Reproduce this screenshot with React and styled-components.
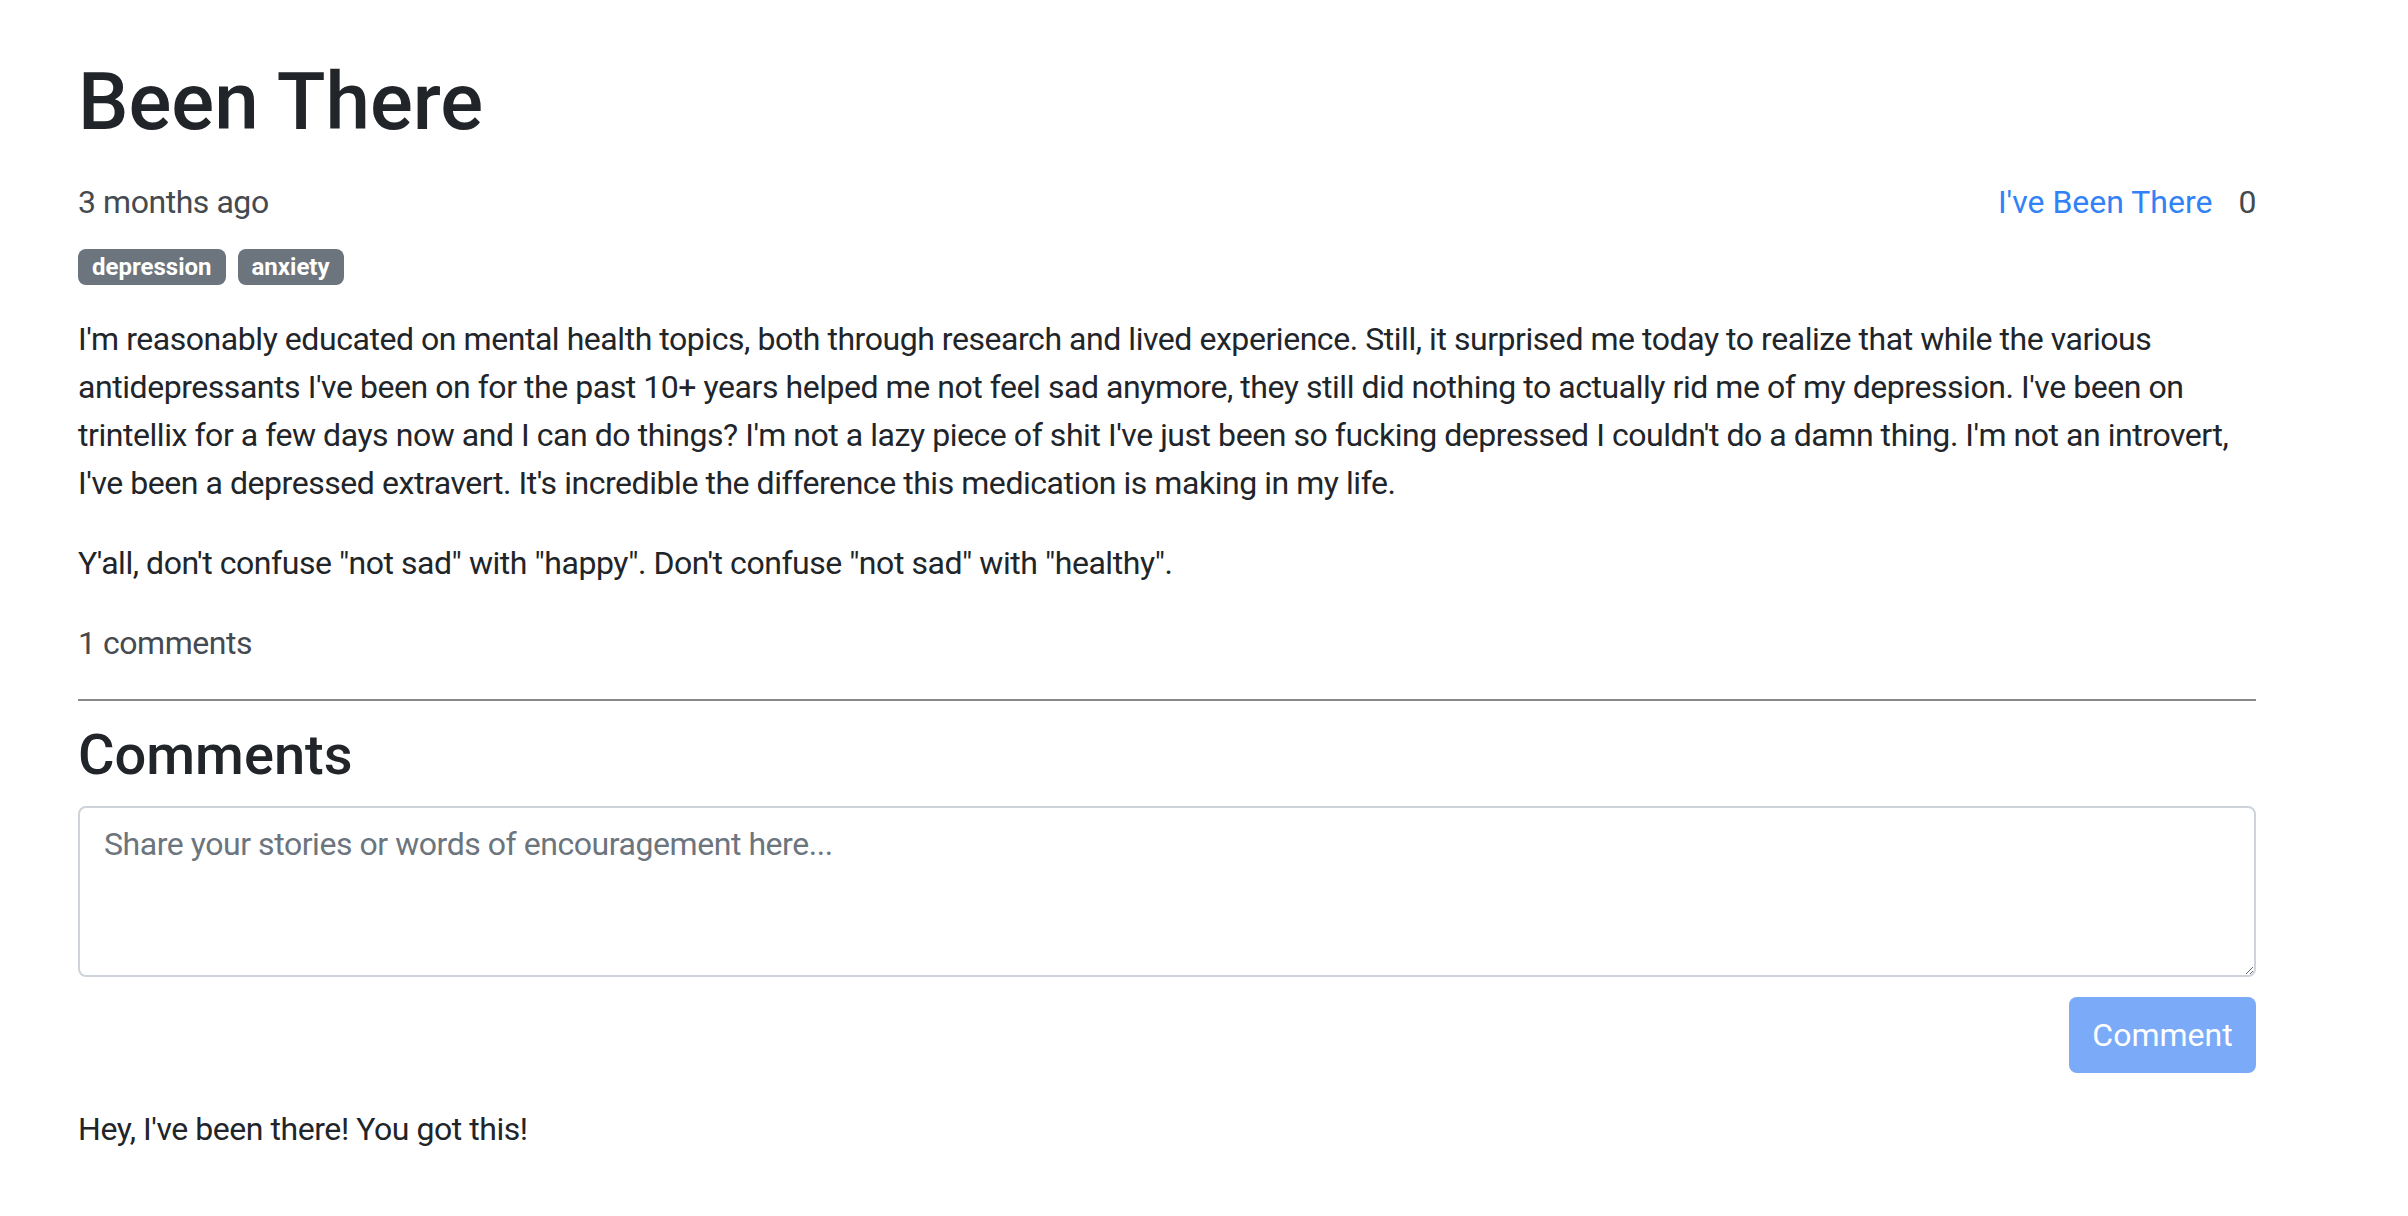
import React from "react";
import styled, { createGlobalStyle } from "styled-components";

const GlobalStyle = createGlobalStyle`
  * { box-sizing: border-box; }
  body {
    margin: 0;
    background: #fff;
    color: #212529;
    font-family: Roboto, "Liberation Sans", sans-serif;
    font-size: 32px;
    line-height: 1.5;
    letter-spacing: -0.45px;
  }
`;

const Page = styled.main`
  width: 2178px;
  margin-left: 78px;
  padding-top: 54px;
  padding-bottom: 48px;
`;

const Title = styled.h1`
  margin: 0 0 28px;
  font-size: 80px;
  font-weight: 500;
  line-height: 1.2;
  letter-spacing: 0;
`;

const MetaRow = styled.div`
  display: flex;
  justify-content: space-between;
  align-items: center;
  color: #454a50;
`;

const Votes = styled.div`
  display: flex;
  align-items: center;
  gap: 26px;
`;

const VoteLink = styled.a`
  color: #3182f6;
  letter-spacing: 0;
  text-decoration: none;
  cursor: pointer;
`;

const Tags = styled.div`
  display: flex;
  gap: 12px;
  margin: 23px 0 30px;
`;

const Badge = styled.span`
  display: inline-block;
  padding: 6px 14px;
  font-size: 24px;
  font-weight: 700;
  line-height: 1;
  letter-spacing: 0;
  color: #fff;
  background: #6c757d;
  border-radius: 8px;
`;

const Body = styled.p`
  margin: 0 0 32px;
  color: ${(p) => (p.muted ? "#454a50" : "#212529")};
`;

const Rule = styled.hr`
  margin: 0 0 21px;
  border: 0;
  border-top: 2px solid #888;
`;

const SectionTitle = styled.h3`
  margin: 0 0 17px;
  font-size: 56px;
  font-weight: 500;
  line-height: 1.2;
  letter-spacing: 0;
`;

const TextArea = styled.textarea`
  display: block;
  width: 100%;
  height: 171px;
  padding: 12px 24px;
  font-family: inherit;
  font-size: 32px;
  line-height: 1.5;
  letter-spacing: -0.45px;
  color: #495057;
  border: 2px solid #ced4da;
  border-radius: 8px;
  resize: vertical;
  outline: none;
  &::placeholder { color: #6c757d; }
`;

const Actions = styled.div`
  display: flex;
  justify-content: flex-end;
  margin: 20px 0 32px;
`;

const Button = styled.button`
  width: 187px;
  height: 76px;
  font-family: inherit;
  font-size: 32px;
  color: #fff;
  background: #7aaaf8;
  border: 0;
  border-radius: 8px;
`;

const Comment = styled.p`
  margin: 0;
`;

export default function App() {
  return (
    <>
      <GlobalStyle />
      <Page>
        <Title>Been There</Title>
        <MetaRow>
          <span>3 months ago</span>
          <Votes>
            <VoteLink>I've Been There</VoteLink>
            <span>0</span>
          </Votes>
        </MetaRow>
        <Tags>
          <Badge>depression</Badge>
          <Badge>anxiety</Badge>
        </Tags>
        <Body>
          I'm reasonably educated on mental health topics, both through research and lived
          experience. Still, it surprised me today to realize that while the various
          antidepressants I've been on for the past 10+ years helped me not feel sad anymore,
          they still did nothing to actually rid me of my depression. I've been on trintellix
          for a few days now and I can do things? I'm not a lazy piece of shit I've just been so
          fucking depressed I couldn't do a damn thing. I'm not an introvert, I've been a
          depressed extravert. It's incredible the difference this medication is making in my
          life.
        </Body>
        <Body>
          Y'all, don't confuse "not sad" with "happy". Don't confuse "not sad" with "healthy".
        </Body>
        <Body muted>1 comments</Body>
        <Rule />
        <SectionTitle>Comments</SectionTitle>
        <TextArea placeholder="Share your stories or words of encouragement here..." />
        <Actions>
          <Button disabled>Comment</Button>
        </Actions>
        <Comment>Hey, I've been there! You got this!</Comment>
      </Page>
    </>
  );
}
